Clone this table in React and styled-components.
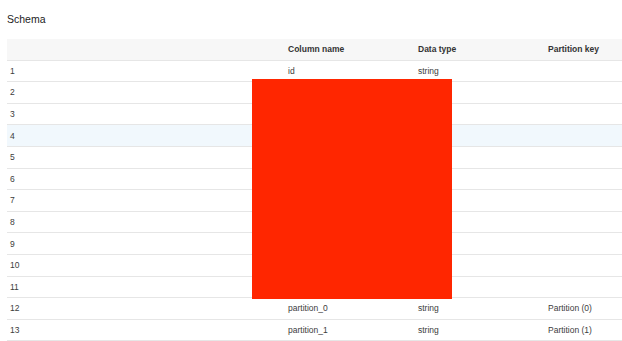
import React from 'react'
import styled, { createGlobalStyle } from 'styled-components'

const GlobalStyle = createGlobalStyle`
    body {
        margin: 0;
        background: #ffffff;
        font-family: "Liberation Sans", Arial, sans-serif;
        color: #333333;
    }
`;

const Page = styled.div`
    position: relative;
    padding: 12px 0 0 7px;
`;

const Title = styled.h2`
    margin: 0 0 13px 0;
    font-size: 10.5px;
    font-weight: normal;
    line-height: 14px;
    color: #222222;
`;

const Table = styled.div`
    display: grid;
    grid-template-columns: 278px 130px 130px 1fr;
`;

const Row = styled.div`
    display: contents;
    & > div {
        background: ${p => p.header ? '#f7f7f7' : p.hover ? '#f1f8fd' : '#ffffff'};
        font-weight: ${p => p.header ? 'bold' : 'normal'};
        color: ${p => p.header ? '#333333' : '#3c3c3c'};
    }
`;

const Cell = styled.div`
    height: 21.6px;
    box-sizing: border-box;
    padding: 0 3px;
    display: flex;
    align-items: center;
    font-size: 8.5px;
    border-bottom: 1px solid #e6e6e6;
    white-space: nowrap;
`;

const Redaction = styled.div`
    position: absolute;
    left: 252px;
    top: 79px;
    width: 200px;
    height: 220px;
    background: #ff2600;
`;

const rows = [
    ['1', 'id', 'string', ''],
    ['2', '', '', ''],
    ['3', '', '', ''],
    ['4', '', '', ''],
    ['5', '', '', ''],
    ['6', '', '', ''],
    ['7', '', '', ''],
    ['8', '', '', ''],
    ['9', '', '', ''],
    ['10', '', '', ''],
    ['11', '', '', ''],
    ['12', 'partition_0', 'string', 'Partition (0)'],
    ['13', 'partition_1', 'string', 'Partition (1)'],
];

const App = () => {
    return (
        <Page>
            <GlobalStyle />
            <Title>Schema</Title>
            <Table>
                <Row header>
                    <Cell></Cell>
                    <Cell>Column name</Cell>
                    <Cell>Data type</Cell>
                    <Cell>Partition key</Cell>
                </Row>
                {rows.map((r, i) => (
                    <Row key={i} hover={i === 3}>
                        {r.map((c, j) => <Cell key={j}>{c}</Cell>)}
                    </Row>
                ))}
            </Table>
            <Redaction />
        </Page>
    );
}

export default App;
